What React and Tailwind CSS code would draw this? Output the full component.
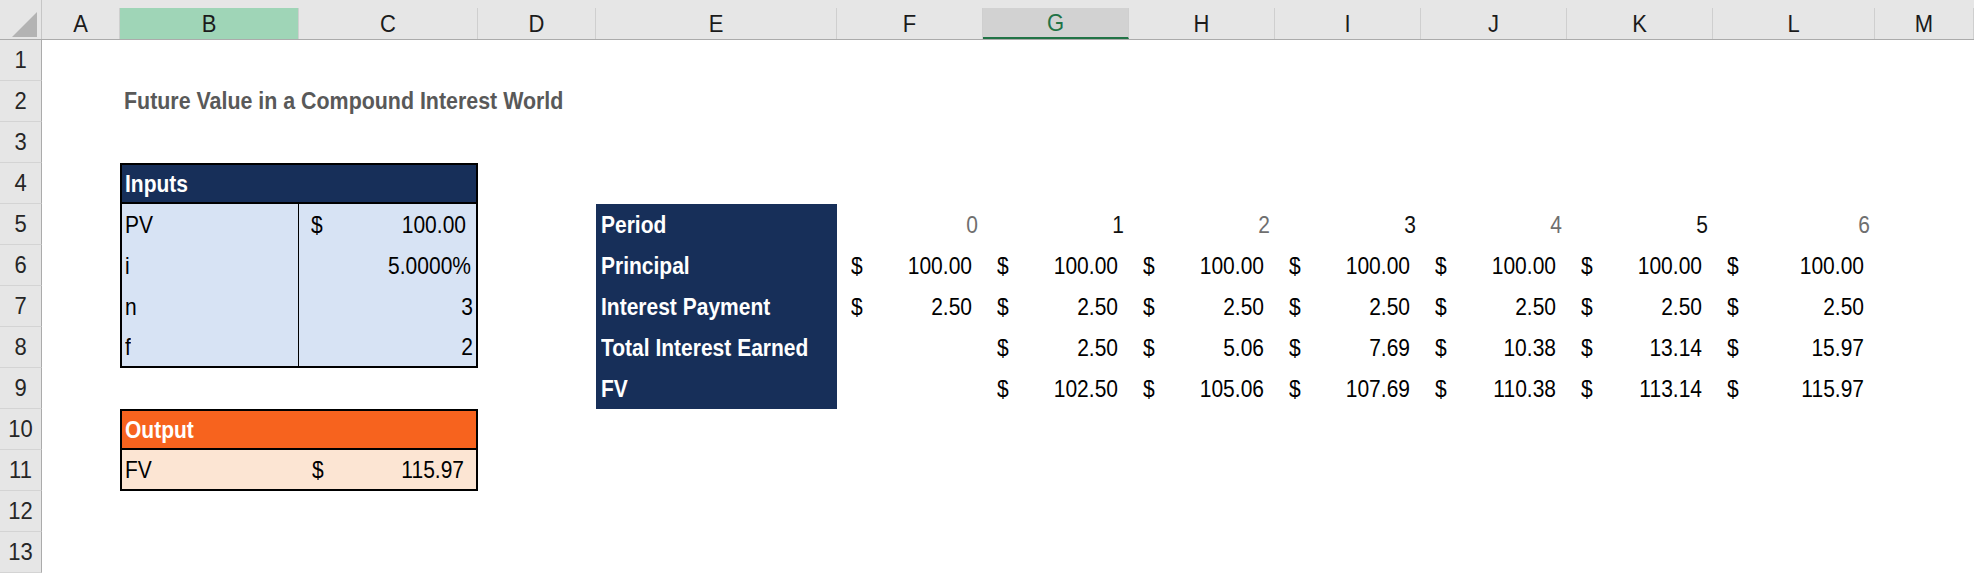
const COLS =
  "grid grid-cols-[42px_78px_179px_179px_118px_241px_146px_146px_146px_146px_146px_146px_162px_1fr]";

const NAVY = "bg-[#172f59]";
const LIGHT = "bg-[#d7e3f4]";

// the sheet's text is drawn a bit taller than Arial's natural proportions
function T({ children }) {
  return <span className="inline-block scale-y-110">{children}</span>;
}

function Row({ n, children }) {
  return (
    <div className={`${COLS} h-[41px]`}>
      <div className="flex items-center justify-center bg-[#e6e6e6] border-r border-b border-r-[#ababab] border-b-[#d4d4d4] text-[22px] text-[#262626]">
        <T>{n}</T>
      </div>
      {children}
    </div>
  );
}

function Money({ v, className = "", pad = "pl-[14px] pr-[11px]" }) {
  return (
    <div className={`flex items-center justify-between ${pad} ${className}`}>
      <T>$</T>
      <T>{v}</T>
    </div>
  );
}

function Period({ v }) {
  const odd = Number(v) % 2 === 1;
  return (
    <div
      className={`flex items-center justify-end pr-[5px] ${
        odd ? "text-[#111111]" : "text-[#6f6f6f]"
      }`}
    >
      <T>{v}</T>
    </div>
  );
}

const letters = ["A", "B", "C", "D", "E", "F", "G", "H", "I", "J", "K", "L", "M"];

export default function App() {
  const principal = ["100.00", "100.00", "100.00", "100.00", "100.00", "100.00", "100.00"];
  const payment = ["2.50", "2.50", "2.50", "2.50", "2.50", "2.50", "2.50"];
  const earned = ["2.50", "5.06", "7.69", "10.38", "13.14", "15.97"];
  const fv = ["102.50", "105.06", "107.69", "110.38", "113.14", "115.97"];

  return (
    <div className="w-[1974px] h-[574px] overflow-hidden bg-white font-['Liberation_Sans',Arial,sans-serif] text-[21px] leading-none text-black">
      {/* column header */}
      <div className={`${COLS} h-[40px] bg-[#e6e6e6] border-b border-[#ababab]`}>
        <div className="h-[39px] flex items-end justify-end pr-[4px] pb-[2px] border-r border-[#c6c6c6]">
          <div className="w-0 h-0 border-l-[25px] border-l-transparent border-b-[25px] border-b-[#b3b3b3]" />
        </div>
        {letters.map((l) => (
          <div
            key={l}
            className={`self-end h-[31px] flex items-center justify-center border-r border-[#cfcfcf] text-[22px] ${
              l === "B"
                ? "bg-[#9fd5b7] text-[#1b1b1b]"
                : l === "G"
                ? "bg-[#d2d2d2] border-b-2 border-b-[#217346] text-[#217346]"
                : "text-[#1b1b1b]"
            }`}
          >
            <T>{l}</T>
          </div>
        ))}
      </div>

      <Row n={1} />

      <Row n={2}>
        <div />
        <div className="flex items-center pl-[4px] whitespace-nowrap font-bold text-[21.4px] text-[#595959]">
          <T>Future Value in a Compound Interest World</T>
        </div>
      </Row>

      <Row n={3} />

      <Row n={4}>
        <div />
        <div className={`col-span-2 flex items-center pl-[3px] ${NAVY} border-2 border-black text-white font-bold`}>
          <T>Inputs</T>
        </div>
      </Row>

      <Row n={5}>
        <div />
        <div className={`flex items-center pl-[3px] ${LIGHT} border-l-2 border-r border-black`}><T>PV</T></div>
        <Money v="100.00" pad="pl-[12px] pr-[10px]" className={`${LIGHT} border-r-2 border-black`} />
        <div />
        <div className={`flex items-center pl-[5px] ${NAVY} text-white font-bold`}><T>Period</T></div>
        {[0, 1, 2, 3, 4, 5, 6].map((p) => (
          <Period key={p} v={String(p)} />
        ))}
      </Row>

      <Row n={6}>
        <div />
        <div className={`flex items-center pl-[3px] ${LIGHT} border-l-2 border-r border-black`}><T>i</T></div>
        <div className={`flex items-center justify-end pr-[5px] ${LIGHT} border-r-2 border-black`}><T>5.0000%</T></div>
        <div />
        <div className={`flex items-center pl-[5px] ${NAVY} text-white font-bold`}><T>Principal</T></div>
        {principal.map((v, i) => (
          <Money key={i} v={v} />
        ))}
      </Row>

      <Row n={7}>
        <div />
        <div className={`flex items-center pl-[3px] ${LIGHT} border-l-2 border-r border-black`}><T>n</T></div>
        <div className={`flex items-center justify-end pr-[3px] ${LIGHT} border-r-2 border-black`}><T>3</T></div>
        <div />
        <div className={`flex items-center pl-[5px] ${NAVY} text-white font-bold`}><T>Interest Payment</T></div>
        {payment.map((v, i) => (
          <Money key={i} v={v} />
        ))}
      </Row>

      <Row n={8}>
        <div />
        <div className={`flex items-center pl-[3px] ${LIGHT} border-l-2 border-r border-b-2 border-black`}><T>f</T></div>
        <div className={`flex items-center justify-end pr-[3px] ${LIGHT} border-r-2 border-b-2 border-black`}><T>2</T></div>
        <div />
        <div className={`flex items-center pl-[5px] ${NAVY} text-white font-bold`}><T>Total Interest Earned</T></div>
        <div />
        {earned.map((v, i) => (
          <Money key={i} v={v} />
        ))}
      </Row>

      <Row n={9}>
        <div />
        <div />
        <div />
        <div />
        <div className={`flex items-center pl-[5px] ${NAVY} text-white font-bold`}><T>FV</T></div>
        <div />
        {fv.map((v, i) => (
          <Money key={i} v={v} />
        ))}
      </Row>

      <Row n={10}>
        <div />
        <div className="col-span-2 flex items-center pl-[3px] bg-[#f7631e] border-2 border-black text-white font-bold">
          <T>Output</T>
        </div>
      </Row>

      <Row n={11}>
        <div />
        <div className="flex items-center pl-[3px] bg-[#fce5d3] border-l-2 border-b-2 border-black"><T>FV</T></div>
        <Money v="115.97" pad="pl-[13px] pr-[12px]" className="bg-[#fce5d3] border-r-2 border-b-2 border-black" />
      </Row>

      <Row n={12} />
      <Row n={13} />
    </div>
  );
}
